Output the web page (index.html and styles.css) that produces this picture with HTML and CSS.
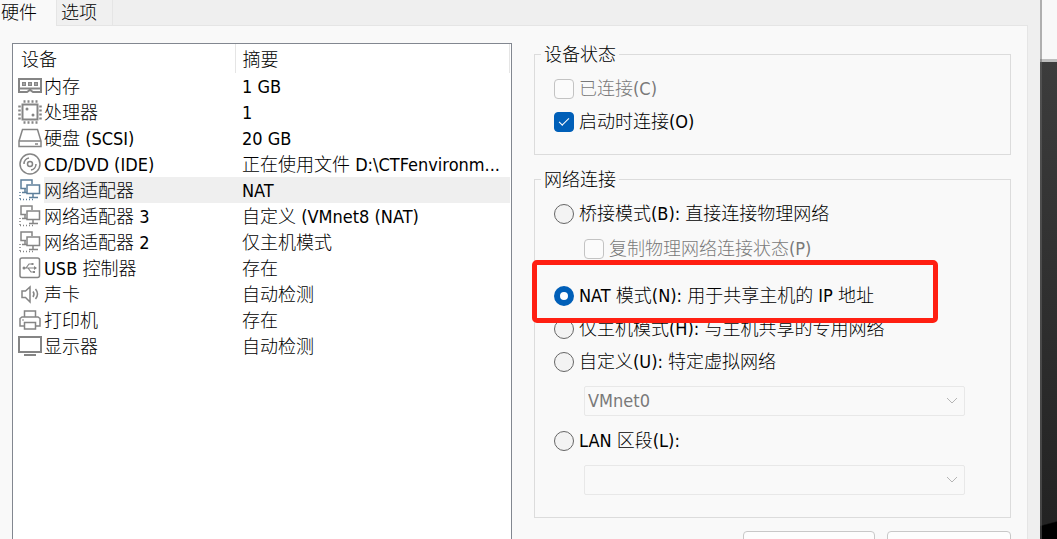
FILE: index.html
```html
<!DOCTYPE html>
<html lang="zh-CN">

<head>
    <meta charset="utf-8">
    <meta name="viewport" content="width=device-width, initial-scale=1.0">
    <title>虚拟机设置</title>
    <link rel="stylesheet" href="styles.css">
</head>

<body>
    <main class="window">
        <nav class="tabs">
            <button class="tab active">硬件</button>
            <button class="tab">选项</button>
        </nav>
        <div class="pane">
            <section class="devices">
                <table>
                    <thead>
                        <tr><th class="col-device">设备</th><th class="col-summary">摘要</th></tr>
                    </thead>
                    <tbody>
                        <tr>
                            <td><div class="device">
                                <svg class="icon" viewBox="0 0 24 24"><path d="M1 5h22v13H15l-3-2-3 2H1zM1 14.500h22" stroke-width="2"/><path class="fill" d="M4 8h4v4H4zM10 8h4v4h-4zM16 8h4v4h-4z"/><path class="dot" d="M5.500 9.500h1v1h-1zM11.500 9.500h1v1h-1zM17.500 9.500h1v1h-1z"/></svg>
                                <span>内存</span></div></td>
                            <td>1 GB</td>
                        </tr>
                        <tr>
                            <td><div class="device">
                                <svg class="icon" viewBox="0 0 24 24"><path d="M4.500 4.500h15v15h-15z" stroke-width="2"/><path d="M5.500 1.500h14M5.500 22.500h14M1.500 5.500v14M22.500 5.500v14" stroke-width="2.500" stroke-dasharray="2 2"/><circle class="fill" cx="9" cy="9" r="1.500"/><circle class="fill" cx="15" cy="15" r="1.500"/></svg>
                                <span>处理器</span></div></td>
                            <td>1</td>
                        </tr>
                        <tr>
                            <td><div class="device">
                                <svg class="icon" viewBox="0 0 24 24"><path d="M1 15 4.500 3.500h15L23 15v5.500H1zM1 15h22"/><path d="M17 18h3"/></svg>
                                <span>硬盘 (SCSI)</span></div></td>
                            <td>20 GB</td>
                        </tr>
                        <tr>
                            <td><div class="device">
                                <svg class="icon" viewBox="0 0 24 24"><circle cx="12" cy="12" r="10"/><circle cx="12" cy="12" r="2.500"/><path d="M6 12a6 6 0 0 1 5-6M18 12a6 6 0 0 1-5 6"/></svg>
                                <span>CD/DVD (IDE)</span></div></td>
                            <td>正在使用文件 D:\CTFenvironm...</td>
                        </tr>
                        <tr class="selected">
                            <td><div class="device">
                                <svg class="icon" viewBox="0 0 24 24"><path d="M8 10.500H3V2h11v4M9 7h12.500v8.500H9zM15 16v3M11 19.500h9M7 11v3M4 14.500h5"/><path d="M2 14v8M2 21.500h13" stroke-dasharray="1 2"/></svg>
                                <span>网络适配器</span></div></td>
                            <td>NAT</td>
                        </tr>
                        <tr>
                            <td><div class="device">
                                <svg class="icon" viewBox="0 0 24 24"><path d="M8 10.500H3V2h11v4M9 7h12.500v8.500H9zM15 16v3M11 19.500h9M7 11v3M4 14.500h5"/><path d="M2 14v8M2 21.500h13" stroke-dasharray="1 2"/></svg>
                                <span>网络适配器 3</span></div></td>
                            <td>自定义 (VMnet8 (NAT)</td>
                        </tr>
                        <tr>
                            <td><div class="device">
                                <svg class="icon" viewBox="0 0 24 24"><path d="M8 10.500H3V2h11v4M9 7h12.500v8.500H9zM15 16v3M11 19.500h9M7 11v3M4 14.500h5"/><path d="M2 14v8M2 21.500h13" stroke-dasharray="1 2"/></svg>
                                <span>网络适配器 2</span></div></td>
                            <td>仅主机模式</td>
                        </tr>
                        <tr>
                            <td><div class="device">
                                <svg class="icon" viewBox="0 0 24 24"><rect x="2" y="2" width="19.500" height="19.500" rx="2"/><path d="M6 12h12M8 12l3-4h3M10 12l3 4h3" stroke-width="1.200"/><circle class="fill" cx="6" cy="12" r="1.500"/><path class="fill" d="M16 10l3 2-3 2zM13.500 7h2v2h-2zM15 15h2v2h-2z"/></svg>
                                <span>USB 控制器</span></div></td>
                            <td>存在</td>
                        </tr>
                        <tr>
                            <td><div class="device">
                                <svg class="icon" viewBox="0 0 24 24"><path d="M4 9h3.500L12 5v15l-4.500-4.500H4z"/><path d="M15 9.500q2 2.500 0 5.500M17.500 7q4 5 0 10"/></svg>
                                <span>声卡</span></div></td>
                            <td>自动检测</td>
                        </tr>
                        <tr>
                            <td><div class="device">
                                <svg class="icon" viewBox="0 0 24 24"><path d="M6.500 9V3h11v6M6 18H2v-7.500L4 9h16l2 1.500V18h-4M6.500 14.500h11V21h-11z"/><path d="M4 12h2" stroke-width="1"/></svg>
                                <span>打印机</span></div></td>
                            <td>存在</td>
                        </tr>
                        <tr>
                            <td><div class="device">
                                <svg class="icon" viewBox="0 0 24 24"><path d="M1 3h22v15H1z" stroke-width="2"/><path d="M6 21h12" stroke-width="2"/></svg>
                                <span>显示器</span></div></td>
                            <td>自动检测</td>
                        </tr>
                    </tbody>
                </table>
            </section>

            <section class="settings">
                <fieldset>
                    <legend>设备状态</legend>
                    <label class="option disabled"><input type="checkbox" disabled>已连接(C)</label>
                    <label class="option"><input type="checkbox" checked>启动时连接(O)</label>
                </fieldset>

                <fieldset class="network">
                    <legend>网络连接</legend>
                    <label class="option"><input type="radio" name="net">桥接模式(B): 直接连接物理网络</label>
                    <label class="option sub disabled"><input type="checkbox" disabled>复制物理网络连接状态(P)</label>
                    <div class="marked">
                        <label class="option"><input type="radio" name="net" checked>NAT 模式(N): 用于共享主机的 IP 地址</label>
                    </div>
                    <label class="option"><input type="radio" name="net">仅主机模式(H): 与主机共享的专用网络</label>
                    <label class="option"><input type="radio" name="net">自定义(U): 特定虚拟网络</label>
                    <div class="picker">
                        <select aria-label="特定虚拟网络" disabled><option>VMnet0</option></select>
                        <svg viewBox="0 0 12 12"><path d="M1 3l5 5 5-5"/></svg>
                    </div>
                    <label class="option"><input type="radio" name="net">LAN 区段(L):</label>
                    <div class="picker">
                        <select aria-label="LAN 区段" disabled><option></option></select>
                        <svg viewBox="0 0 12 12"><path d="M1 3l5 5 5-5"/></svg>
                    </div>
                </fieldset>

                <div class="actions">
                    <button aria-label="LAN 区段设置"></button>
                    <button aria-label="高级设置"></button>
                </div>
            </section>
        </div>
    </main>
    <aside class="desktop"></aside>
</body>

</html>
```
FILE: styles.css
```css
*,
*::before,
*::after {
    box-sizing: border-box;
}

body {
    margin: 0;
    height: 100vh;
    display: flex;
    overflow: hidden;
    background-color: #efefef;
    color: #000;
    font-family: "DejaVu Sans Condensed", "Noto Sans CJK SC", sans-serif;
    font-size: 18px;
    font-weight: 300;
    line-height: 26px;
}

button,
input,
select {
    font: inherit;
    color: inherit;
    margin: 0;
}

.window {
    flex: 1;
    min-width: 0;
    display: flex;
    flex-direction: column;
    padding-right: 12px;
}

/* tabs */

.tabs {
    display: flex;
    height: 26px;
    flex-shrink: 0;
    border-bottom: 1px solid #e5e5e5;
}

.tab {
    width: 56px;
    height: 25px;
    padding: 0 0 0 4px;
    border: none;
    border-right: 1px solid #e5e5e5;
    background-color: #f0f0f0;
    line-height: 25px;
    text-align: left;
}

.tab.active {
    width: 57px;
    height: 26px;
    padding: 0 0 4px 1px;
    background-color: #f9f9f9;
}

.pane {
    flex: 1;
    min-height: 0;
    display: flex;
    gap: 22px;
    padding: 17px 16px 0 12px;
    overflow: hidden;
    background-color: #f9f9f9;
    border-right: 1px solid #e5e5e5;
}

/* device list */

.devices {
    flex: 0 0 500px;
    border: 1px solid #828790;
    border-bottom: none;
    padding-right: 1px;
    background-color: #fff;
}

table {
    width: 100%;
    table-layout: fixed;
    border-collapse: collapse;
}

th {
    height: 29px;
    padding: 3px 0 0 8px;
    font-weight: 300;
    text-align: left;
    border-right: 1px solid #e5e5e5;
}

.col-device {
    width: 222px;
}

.col-summary {
    padding-left: 7px;
}

td {
    height: 26px;
    padding: 2px 0 0 7px;
    line-height: 24px;
    white-space: nowrap;
}

td:first-child {
    padding: 0 0 0 5px;
}

.device {
    display: flex;
    align-items: center;
    gap: 2px;
}

.device span {
    flex: 1;
    padding-top: 2px;
}

.selected span,
.selected td + td {
    background-color: #efefef;
}

.icon {
    width: 24px;
    height: 24px;
    fill: none;
    stroke: #858585;
    stroke-width: 1.5;
}

.icon .fill {
    fill: #858585;
    stroke: none;
}

.icon .dot {
    fill: #fff;
    stroke: none;
}

.selected .icon {
    stroke: #5d7f9b;
}

/* settings */

.settings {
    flex: 1;
    min-width: 0;
}

fieldset {
    min-width: 0;
    margin: 0;
    padding: 7px 45px 16px 19px;
    border: 1px solid #dcdcdc;
}

fieldset.network {
    margin-top: 13px;
    padding-bottom: 22px;
}

legend {
    margin-left: -13px;
    padding: 1px 3px 0;
    line-height: 21px;
}

.option {
    display: flex;
    align-items: center;
    gap: 5px;
    height: 33px;
    white-space: nowrap;
}

.option.sub {
    margin: 2px 0 14px 30px;
}

.disabled {
    color: #797979;
}

input {
    appearance: none;
    flex-shrink: 0;
    width: 20px;
    height: 20px;
    border: 1px solid #666;
    background-color: #f3f3f3;
}

input[type="radio"] {
    border-radius: 50%;
}

input[type="radio"]:checked {
    border: 6px solid #005fb8;
    background-color: #fff;
}

input[type="checkbox"] {
    display: grid;
    place-items: center;
    border-radius: 4px;
}

input[type="checkbox"]:disabled {
    border-color: #c3c3c3;
    background-color: #fbfbfb;
}

input[type="checkbox"]:checked {
    border-color: #005fb8;
    background-color: #005fb8;
}

input[type="checkbox"]:checked::before {
    content: "";
    width: 10px;
    height: 5px;
    border: solid #fff;
    border-width: 0 0 1px 1px;
    transform: translateY(-1px) rotate(-45deg);
}

/* red frame drawn round the chosen mode */

.marked {
    position: relative;
}

.marked::after {
    content: "";
    position: absolute;
    top: -19px;
    left: -22px;
    width: 406px;
    height: 63px;
    border: 5px solid #ff1f12;
    border-radius: 5px;
    pointer-events: none;
}

.picker {
    position: relative;
    margin: 8px 0 8px 30px;
}

.picker select {
    appearance: none;
    display: block;
    width: 100%;
    height: 30px;
    padding: 0 3px;
    border: 1px solid #e8e8e8;
    border-radius: 2px;
    background-color: #f9f9f9;
    color: #797979;
    opacity: 1;
}

.picker svg {
    position: absolute;
    top: 9px;
    right: 7px;
    width: 12px;
    height: 12px;
    fill: none;
    stroke: #b5b5b5;
}

.network .picker:last-child {
    margin-bottom: 0;
}

.actions {
    display: flex;
    justify-content: flex-end;
    gap: 12px;
    margin-top: 13px;
}

.actions button {
    width: 132px;
    height: 34px;
    border: 1px solid #c8c8c8;
    border-radius: 4px;
    background-color: #fdfdfd;
}

.actions button:last-child {
    width: 124px;
}

/* what shows beside the window */

.desktop {
    flex: 0 0 17px;
    border-left: 2px solid rgba(102, 102, 102, .5);
    background:
        linear-gradient(165deg, transparent 50%, #000 54%) bottom / 100% 32px no-repeat border-box,
        linear-gradient(#f8f8f8 59px, #bebebe 59px, #bebebe 62px, #3c3c3c 62px, #222 100%) border-box;
}
```
